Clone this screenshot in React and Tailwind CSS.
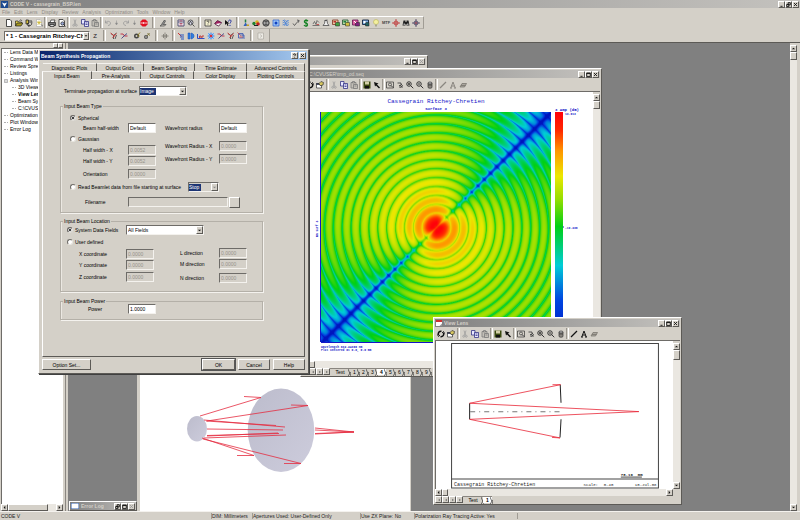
import React, { useLayoutEffect, useRef } from "react";

const FACE = "bg-[#d4d0c8]";
const RAISED = "border border-t-white border-l-white border-r-[#5c5a56] border-b-[#5c5a56]";
const SUNKEN = "border border-t-[#6e6c68] border-l-[#6e6c68] border-r-[#f4f2ee] border-b-[#f4f2ee]";

/* ---------- icons, drawn on a 16 unit grid ---------- */
const page = "M3 1h7l3 3v11H3z";
const ICONS = {
  new: <path d={page} fill="#fff" stroke="#222" strokeWidth="1.6" />,
  open: (
    <g stroke="#222" strokeWidth="1.4">
      <path d="M1 14V4h5l1 2h6v3" fill="#e8d44a" />
      <path d="M1 14l3-6h12l-4 6z" fill="#a89a20" />
      <path d="M9 3c2-2 4-1 5 1" fill="none" />
    </g>
  ),
  save2: (
    <g stroke="#222" strokeWidth="1.6">
      <path d="M2 2h5v8H2z" fill="#d8c040" />
      <path d="M6 14c6 1 9-4 7-11M5 8l1 6 4-2M10 2v6" fill="none" />
    </g>
  ),
  spark: (
    <g>
      <path d={page} fill="#fff" stroke="#999" />
      <path d="M8 3v9M4 7h9M5 4l6 7M11 4l-6 7" stroke="#c8b020" strokeWidth="1.2" />
      <path d="M12 12h3v3" stroke="#555" fill="none" />
    </g>
  ),
  print: (
    <g stroke="#222" strokeWidth="1.4">
      <path d="M4 7l2-5h8l-2 5" fill="#fff" />
      <path d="M1 7h14v6H1z" fill="#777" />
      <path d="M4 11h8v4H4z" fill="#ddd" />
    </g>
  ),
  preview: (
    <g stroke="#222" strokeWidth="1.5">
      <path d="M2 1h8l3 3v11H2z" fill="#fff" />
      <circle cx="9" cy="9" r="3.2" fill="#9ad" />
      <path d="M11 11l4 4" />
    </g>
  ),
  cut: (
    <g stroke="#999" strokeWidth="1.5" fill="none">
      <path d="M6 1l3 9M10 1L7 10" />
      <circle cx="5.5" cy="12.5" r="2" />
      <circle cx="10.5" cy="12.5" r="2" />
    </g>
  ),
  copy: (
    <g stroke="#2a2a80" strokeWidth="1.5" fill="#e8e8ff">
      <path d="M1 1h7v9H1z" />
      <path d="M7 5h8v10H7zM9 8h4M9 11h4" />
    </g>
  ),
  paste: (
    <g stroke="#777" strokeWidth="1.5" fill="#c4c0b8">
      <path d="M2 3h10v11H2z" />
      <path d="M5 1h4v3H5zM7 7h8v8H7zM9 10h4" />
    </g>
  ),
  undo: <path d="M3 3v5h5M3 8c3-5 9-4 10 0 0 3-2 5-5 5" fill="none" stroke="#999" strokeWidth="1.6" />,
  redo: <path d="M13 3v5H8M13 8C10 3 4 4 3 8c0 3 2 5 5 5" fill="none" stroke="#999" strokeWidth="1.6" />,
  drop: <path d="M7 3v7M5 8h4l-2 4z" fill="#888" stroke="#888" />,
  stop: (
    <g>
      <path d="M5 1h6l4 4v6l-4 4H5l-4-4V5z" fill="#e01020" />
      <path d="M3 8h10" stroke="#fff" strokeWidth="3" strokeDasharray="2 1" />
    </g>
  ),
  pen: (
    <g stroke="#444" strokeWidth="1.4" fill="#c8c4bc">
      <path d="M2 14h9l3-3H6z" />
      <path d="M5 11l6-9 2 2-4 7" fill="#999" />
    </g>
  ),
  sheet: (
    <g stroke="#343460" strokeWidth="1.6" fill="#fff">
      <path d="M2 2h12v12H2zM2 6h12" />
      <path d="M5 9h6M5 12h6M5 4h6" stroke="#a03050" />
    </g>
  ),
  find: (
    <g stroke="#333" strokeWidth="1.6" fill="#dde">
      <circle cx="7" cy="7" r="5" />
      <path d="M7 4l-3 6M7 4l3 6M11 11l4 4" />
    </g>
  ),
  book: (
    <g stroke="#333" strokeWidth="1.5">
      <path d="M2 2h12v12H2z" fill="#f4f0d0" />
      <path d="M6 6c0-3 4-3 4 0 0 1-2 2-2 3M8 11v1" fill="none" />
    </g>
  ),
  bookred: (
    <g stroke="#401030" strokeWidth="1.3">
      <path d="M1 9l6-6 8 4-6 7z" fill="#a02060" />
      <path d="M2 10l7 4 6-6" fill="#fff" />
    </g>
  ),
  whats: (
    <g>
      <path d="M2 2v10l3-3 2 5 2-1-2-4h4z" fill="#111" />
      <path d="M9 5c0-4 6-4 5 0 0 2-2 2-2 4M12 12v2" stroke="#2030a0" strokeWidth="2" fill="none" />
    </g>
  ),
  bulb: (
    <g>
      <path d="M7 1v6" stroke="#208040" strokeWidth="3" />
      <path d="M3 14l4-7 5 7z" fill="#3060c0" />
      <path d="M9 11h5v3H9z" fill="#c8a020" />
    </g>
  ),
  balls: (
    <g>
      <circle cx="4" cy="9" r="3.4" fill="#208030" />
      <circle cx="10" cy="6" r="3.6" fill="#d8b020" />
      <circle cx="12" cy="10" r="3.6" fill="#c02020" />
      <path d="M4 13h8" stroke="#222" strokeWidth="2" />
    </g>
  ),
  wheel: (
    <g stroke="#222" strokeWidth="1.8" fill="#ddd">
      <circle cx="8" cy="8" r="6.3" />
      <path d="M2 8h12M4 5h8M4 11h8M8 2v12" strokeWidth="1.2" />
    </g>
  ),
  spot: (
    <g>
      <path d="M2 2h12v12H2z" fill="#9cc4f4" stroke="#2860d0" strokeWidth="1.4" />
      <circle cx="8" cy="8" r="3" fill="#1040c0" />
    </g>
  ),
  waves: (
    <path d="M1 4l4-2 4 3 5-2M1 8l4-2 4 3 5-2M1 12l4-2 4 3 5-2M3 2l8 12M11 2L4 14" stroke="#3878d8" strokeWidth="1.3" fill="none" />
  ),
  tool: (
    <g stroke="#555" strokeWidth="1.8" fill="none">
      <path d="M2 9l3 4 4-5 5-5" />
      <path d="M10 2l4 1-1 4" />
    </g>
  ),
  dollar: (
    <g stroke="#108020" strokeWidth="2.6" fill="none">
      <path d="M12 4C8 1 4 3 5 6s7 2 6 6c-1 3-5 3-7 0" />
      <path d="M8 1v14" strokeWidth="1.6" />
    </g>
  ),
  chart: (
    <g stroke="#555" strokeWidth="1.5" fill="none">
      <path d="M1 13h14M2 10l3-5 3 6 2-8 4 4" />
      <path d="M9 11h5" stroke="#c03030" />
    </g>
  ),
  bell: (
    <g stroke="#444" strokeWidth="1.5" fill="#eee">
      <path d="M2 13h12l-3-4-1-6H6L5 9z" />
      <path d="M5 3l6-1" />
    </g>
  ),
  mapA: (
    <g>
      <path d="M1 2h11v9H1z" fill="#e8c8a0" stroke="#803020" strokeWidth="1.6" />
      <path d="M7 7h8v7H7z" fill="#40a040" stroke="#222" />
      <path d="M3 4h5v3H3z" fill="#c03030" />
    </g>
  ),
  mapB: (
    <g>
      <path d="M1 2h11v9H1z" fill="#b0d8a0" stroke="#205030" strokeWidth="1.6" />
      <path d="M7 7h8v7H7z" fill="#d0c040" stroke="#222" />
      <path d="M3 4h5v3H3z" fill="#208040" />
    </g>
  ),
  mapC: (
    <g>
      <path d="M1 2h11v10H1z" fill="#e060a0" stroke="#601050" strokeWidth="1.6" />
      <path d="M7 7h8v7H7z" fill="#802080" stroke="#222" />
      <path d="M4 4l4 4" stroke="#fff" strokeWidth="2" />
    </g>
  ),
  mapD: (
    <g>
      <path d="M1 2h12v9H1z" fill="#80b0e0" stroke="#102040" strokeWidth="1.8" />
      <path d="M7 7h7v7H7z" fill="#206060" stroke="#222" />
      <path d="M3 4h4v4H3z" fill="#fff" />
    </g>
  ),
  lamp: (
    <g>
      <circle cx="8" cy="6" r="5" fill="#f4f0a0" stroke="#b0a840" />
      <path d="M6 11h4v4H6z" fill="#a8a890" />
    </g>
  ),
  target: (
    <g stroke="#c04040" strokeWidth="1.8" fill="none">
      <circle cx="8" cy="8" r="4" />
      <path d="M8 0v16M0 8h16" />
    </g>
  ),
  targetB: (
    <g stroke="#504868" strokeWidth="1.8" fill="none">
      <circle cx="8" cy="8" r="4" />
      <path d="M8 0v16M0 8h16" />
      <circle cx="8" cy="8" r="1.5" fill="#c03040" stroke="none" />
    </g>
  ),
  bino: (
    <g fill="#222">
      <path d="M3 3h4v3h2V3h4l2 10H9v-3H7v3H1z" />
      <path d="M3 9h3v3H3zM10 9h3v3h-3z" fill="#aaa" />
    </g>
  ),
  redray: (
    <g strokeWidth="1.7" fill="none">
      <path d="M2 3l5 4 6-5M7 7v7M13 6l-3 8" stroke="#444" />
      <path d="M1 2l8 6M5 12l8-9" stroke="#d03030" />
    </g>
  ),
  gear: (
    <g>
      <circle cx="7" cy="8" r="5" fill="#444" />
      <circle cx="7" cy="8" r="2" fill="#d4d0c8" />
      <path d="M9 7l5-6M10 9l3-1" stroke="#908020" strokeWidth="2" />
    </g>
  ),
  gearB: (
    <g>
      <circle cx="6" cy="10" r="4" fill="#555" />
      <circle cx="6" cy="10" r="1.6" fill="#d4d0c8" />
      <path d="M8 8l5-6M9 3l5 4" stroke="#807840" strokeWidth="2" />
    </g>
  ),
  cross: <path d="M8 1v14M1 8h14M5 4v8M11 4v8" stroke="#77736c" strokeWidth="1.5" />,
  bars: (
    <g strokeWidth="2">
      <path d="M2 2l7 7" stroke="#d03030" />
      <path d="M6 6h8M6 10h8M8 14h6" stroke="#2858c0" />
    </g>
  ),
  blueD: (
    <g fill="#3080e0" stroke="#1848b0">
      <path d="M2 2h4v12H2zM8 2c8 1 8 11 0 12z" />
    </g>
  ),
  err: (
    <g strokeWidth="1.8" fill="none">
      <path d="M1 4v9h14" stroke="#2040c0" />
      <path d="M5 12V8h3v4M10 12V8h4" stroke="#c03030" />
    </g>
  ),
  star: (
    <g>
      <path d="M2 2h12v12H2z" fill="#a8ccf4" />
      <path d="M8 1v14M1 8h14M3 3l10 10M13 3L3 13" stroke="#2878e0" strokeWidth="1.6" />
      <circle cx="8" cy="8" r="2.6" fill="#e03030" />
    </g>
  ),
  ray2: (
    <g strokeWidth="1.8" fill="none">
      <path d="M1 4h5l3 4h6" stroke="#c02840" />
      <path d="M3 13l5-5 6-5" stroke="#404080" />
    </g>
  ),
  boxes: (
    <g strokeWidth="1.5" fill="none">
      <path d="M3 3h9v9H3zM6 6h8v8" stroke="#3050b0" />
      <path d="M1 1l6 6M5 10h6" stroke="#d03030" />
    </g>
  ),
  ghost: (
    <g stroke="#9a968e" fill="#eceae4">
      <path d="M2 2h11v12H2z" />
      <path d="M6 5l4 3-4 3" fill="none" />
    </g>
  ),
  recycle: (
    <g stroke="#111" strokeWidth="3" fill="none">
      <path d="M9 2.5C4 2 1.5 6 3 10M7 13.5c5 .5 7.5-3.5 6-8" />
      <path d="M1 9l2 4 3-3M15 7l-2-4-3 3" strokeWidth="1.8" />
    </g>
  ),
  props: (
    <g stroke="#333" strokeWidth="1.4">
      <path d="M1 5h10v9H1z" fill="#fff" />
      <path d="M1 5h10v2H1z" fill="#2030a0" />
      <path d="M8 9l-2-4 4-4 5 2-1 5-4 1z" fill="#d8c860" />
    </g>
  ),
  disk: (
    <g>
      <path d="M1 1h14v14H1z" fill="#3a4a10" />
      <path d="M4 1h8v6H4z" fill="#d4d0a8" />
      <path d="M4 10h8v5H4z" fill="#111" />
    </g>
  ),
  arrow: <path d="M2 2l2 9 2-2 6 6 2-2-6-6 3-2z" fill="#111" />,
  zoomfit: (
    <g stroke="#333" strokeWidth="1.4" fill="none">
      <path d="M1 2h14v12H1z" />
      <circle cx="8" cy="7" r="3" />
      <path d="M10 9l4 4" strokeWidth="2" />
    </g>
  ),
  pan: (
    <g stroke="#333" strokeWidth="1.6" fill="none">
      <path d="M3 4h7v5H6M6 12h8" />
      <path d="M10 6l3 3-4 4" />
    </g>
  ),
  zoomin: (
    <g stroke="#222" strokeWidth="1.8" fill="none">
      <circle cx="6" cy="6" r="4.5" />
      <path d="M4 6h4M6 4v4M9.5 9.5l5 5" />
    </g>
  ),
  zoomout: (
    <g stroke="#222" strokeWidth="1.8" fill="none">
      <circle cx="6" cy="6" r="4.5" />
      <path d="M4 6h4M9.5 9.5l5 5" />
    </g>
  ),
  can: (
    <g stroke="#333" strokeWidth="1.4" fill="#8a8680">
      <path d="M4 4h8v9c-2 2-6 2-8 0z" />
      <ellipse cx="8" cy="4" rx="4" ry="2" fill="#ccc" />
      <path d="M4 8h8" />
    </g>
  ),
  line: <path d="M2 14L14 2" stroke="currentColor" strokeWidth="2.4" />,
  letter: <path d="M2 14h4M10 14h4M3.5 14L8 2l4.5 12M5 10h6" stroke="currentColor" strokeWidth="2" fill="none" />,
  erase: <path d="M2 12l4-7h9l-4 7zM4 9h9" fill="#aaa69e" stroke="#77736c" strokeWidth="1.5" />,
};

const Icon = ({ name }) => (
  <svg viewBox="0 0 16 16" className="h-2 w-2 shrink-0" aria-hidden="true">
    {ICONS[name]}
  </svg>
);

const Tool = ({ name, className = "w-[10px] text-[#222]" }) => (
  <button type="button" aria-label={name} className={`flex h-[10px] shrink-0 items-center justify-center ${className}`}>
    <Icon name={name} />
  </button>
);

const Sep = ({ className = "w-[3px]" }) => (
  <div className={`flex h-[11px] shrink-0 justify-center gap-px ${className}`}>
    <div className="w-px bg-[#9a968e]" />
    <div className="w-px bg-white" />
  </div>
);

const Tools = ({ names }) => names.map((n) => <Tool key={n} name={n} />);

/* ---------- window parts ---------- */
const GLYPHS = {
  min: "M2 6h3",
  max: "M1 1.5h5v5h-5zM1 2h5",
  restore: "M3 1h3v3H3zM1 3.5h3v3H1z",
  close: "M1.5 1.5l4 4M5.5 1.5l-4 4",
  help: "M2 2.5C2 .8 5 .8 5 2.5 5 3.5 3.5 3.5 3.5 4.5M3.5 6v.6",
};

const Caption = ({ kind, dim }) => (
  <button type="button" aria-label={kind} className={`${FACE} ${RAISED} flex h-[7px] w-[7px] items-center justify-center`}>
    <svg viewBox="0 0 7 7" className="h-[5px] w-[5px]">
      <path d={GLYPHS[kind]} fill="none" stroke={dim ? "#999" : "#111"} strokeWidth="1.3" />
    </svg>
  </button>
);

const Captions = ({ kinds, dimClose }) => (
  <div className="ml-auto flex items-center">
    {kinds.map((k) => (
      <Caption key={k} kind={k} dim={dimClose && k === "close"} />
    ))}
  </div>
);

const ARROWS = { up: "M1 4l2-2 2 2z", down: "M1 2l2 2 2-2z", left: "M4 1L2 3l2 2z", right: "M2 1l2 2-2 2z" };
const ScrollButton = ({ dir }) => (
  <button type="button" aria-label={`Scroll ${dir}`} className={`${FACE} ${RAISED} flex h-[7px] w-[7px] shrink-0 items-center justify-center`}>
    <svg viewBox="0 0 6 6" className="h-[5px] w-[5px]">
      <path d={ARROWS[dir]} fill="#111" />
    </svg>
  </button>
);

const VScroll = ({ thumb = "h-[8px]" }) => (
  <div className="flex w-[7px] shrink-0 flex-col bg-[#eae7e1]">
    <div className={`${FACE} h-[2px]`} />
    <ScrollButton dir="up" />
    <div className={`${FACE} ${RAISED} ${thumb}`} />
    <div className="flex-1" />
    <ScrollButton dir="down" />
  </div>
);

const HScroll = ({ thumb = "w-[6px]" }) => (
  <div className="flex h-[7px] shrink-0 bg-[#eae7e1]">
    <ScrollButton dir="left" />
    <div className={`${FACE} ${RAISED} ${thumb}`} />
    <div className="flex-1" />
    <ScrollButton dir="right" />
  </div>
);

const SheetTabs = ({ tabs, active }) => (
  <div className="flex h-[7px] shrink-0 items-center text-[5px] leading-[6px]">
    {["First", "Previous", "Next", "Last"].map((n, i) => (
      <button key={n} type="button" aria-label={n} className={`${FACE} ${RAISED} flex h-[7px] w-[7px] shrink-0 items-center justify-center`}>
        <svg viewBox="0 0 6 6" className="h-1 w-1">
          <path d={i < 2 ? ARROWS.left : ARROWS.right} fill="#555" />
        </svg>
      </button>
    ))}
    {tabs.map((t) => (
      <button
        key={t}
        type="button"
        className={`relative flex h-[7px] shrink-0 items-center justify-center border-t border-[#8a8680] ${t === "Text" ? "w-[20px]" : "w-[9px]"} ${t === active ? "bg-white font-bold" : ""}`}
      >
        {t}
        <svg viewBox="0 0 3 7" className="absolute top-0 -right-px h-[7px] w-[3px]">
          <path d="M0 0l3 7M3 3L0 7" stroke="#333" strokeWidth="0.7" />
        </svg>
      </button>
    ))}
  </div>
);

const ChildTitle = ({ children, kinds = ["min", "max", "close"], dimClose }) => (
  <div className="flex h-[8px] shrink-0 items-center gap-[2px] bg-linear-to-r from-[#808080] to-[#c4c2be] px-px text-[5px] leading-[6px] font-bold text-[#d4d0c8]">
    {children}
    <Captions kinds={kinds} dimClose={dimClose} />
  </div>
);

const DocIcon = () => (
  <svg viewBox="0 0 12 12" className="h-[6px] w-[6px]">
    <path d="M0 0h12v12H0z" fill="#fff" />
    <path d="M0 0h12v4H0z" fill="#d03030" />
    <path d="M7 12h5V7" fill="#999" />
  </svg>
);

const ChildToolbar = ({ dimTools }) => (
  <div className="flex h-[13px] shrink-0 items-center pl-px">
    <Tools names={["recycle", "props"]} />
    <Sep className="w-[4px]" />
    <Tools names={["cut", "copy", "paste"]} />
    <Sep />
    <Tools names={["disk", "arrow"]} />
    <Sep />
    <Tools names={["zoomfit", "pan", "zoomin", "zoomout", "can"]} />
    <Sep />
    <Tool name="line" className={dimTools ? "w-[10px] text-[#8a8680]" : "w-[10px] text-[#111]"} />
    <Tool name="letter" className={dimTools ? "w-[10px] text-[#8a8680]" : "w-[10px] text-[#111]"} />
    <Tool name="erase" />
  </div>
);

/* ---------- amplitude map ---------- */
const STOPS = [
  [0, 0, 20, 190],
  [0.18, 0, 70, 225],
  [0.33, 0, 205, 215],
  [0.5, 0, 208, 20],
  [0.62, 150, 222, 0],
  [0.72, 236, 232, 0],
  [0.84, 255, 150, 0],
  [0.93, 255, 50, 0],
  [1, 255, 0, 10],
];

function colorAt(v) {
  const t = Math.min(1, Math.max(0, v));
  let i = 1;
  while (i < STOPS.length - 1 && t > STOPS[i][0]) i++;
  const a = STOPS[i - 1];
  const b = STOPS[i];
  const f = (t - a[0]) / (b[0] - a[0]);
  return [1, 2, 3].map((k) => a[k] + (b[k] - a[k]) * f);
}

/* Level in 0..1 at an offset from the centre: rings, cut by a dark diagonal. */
function amplitude(dx, dy) {
  const r = Math.hypot(dx, dy);
  const dist = Math.abs(dx + dy) / Math.SQRT2;
  const across = dist / (r + 0.01);
  const pitch = 8.9;
  const first = 14.2;
  const wave = r < first ? Math.sin((Math.PI * r) / first) : Math.sin((Math.PI * (r - first)) / pitch);
  const ringEps = 0.08 + 2 / (r + 8);
  const ring = r < first ? 0.08 * Math.log(Math.abs(wave) + 0.3) : 0.095 * Math.log(Math.abs(wave) + ringEps);
  const base = 0.59 + 0.32 * Math.exp(-r / 48) + 0.12 * Math.exp(-((r / 13) ** 2));
  const lineEps = 0.03 + 1.4 / (r + 6);
  const line = (0.06 + 0.0003 * r) * Math.log(Math.min(1, across * 1.3 + lineEps));
  const trough = 0.0006 * r * Math.exp(-((across / 0.2) ** 2));
  const core = 0.2 * Math.min(1, r / 45) * Math.exp(-((dist / 1.8) ** 2));
  return base + ring + line - trough - core;
}

function AmplitudeMap() {
  const ref = useRef(null);
  useLayoutEffect(() => {
    const { width, height } = ref.current;
    const ctx = ref.current.getContext("2d");
    const img = ctx.createImageData(width, height);
    for (let y = 0; y < height; y++) {
      for (let x = 0; x < width; x++) {
        let c = [0, 0, 0];
        for (const [ox, oy] of [[-0.25, -0.25], [0.25, -0.25], [-0.25, 0.25], [0.25, 0.25]]) {
          const s = colorAt(amplitude(x + ox - width / 2, y + oy - height / 2));
          c = c.map((v, k) => v + s[k] / 4);
        }
        img.data.set([c[0], c[1], c[2], 255], (y * width + x) * 4);
      }
    }
    ctx.putImageData(img, 0, 0);
  }, []);
  return <canvas ref={ref} width="230" height="229" className="shrink-0" />;
}

const MONO = "font-['Liberation_Mono',monospace]";

const PlotWindow = () => (
  <section className={`${FACE} ${RAISED} absolute top-[25px] left-[232px] flex h-[309px] w-[302px] flex-col p-px`}>
    <ChildTitle>
      <span className="pl-[6px] font-normal">C:\CVUSER\tmp_od.seq</span>
    </ChildTitle>
    <div className="pl-[2px]">
      <ChildToolbar dimTools />
    </div>
    <div className="flex min-h-0 flex-1 border-t border-[#6e6c68] pl-[6px]">
      <div className={`${MONO} flex flex-1 flex-col overflow-hidden bg-white pl-[6px] text-[#1414c8]`}>
        <div className="ml-[7px] w-[230px] pt-[6px] text-center">
          <h2 className="text-[6px] leading-[8px]">Cassegrain Ritchey-Chretien</h2>
          <p className="text-[4px] leading-[6px] font-bold">Surface 3</p>
        </div>
        <div className="flex">
          <svg viewBox="0 0 7 230" className="h-[230px] w-[7px] shrink-0">
            <text transform="translate(4 125) rotate(-90)" fontSize="3" fontWeight="bold" fill="#1414c8">mm surf 3</text>
            <path d="M6.5 0v230" stroke="#1414c8" />
          </svg>
          <AmplitudeMap />
          <svg viewBox="0 0 40 230" className="h-[230px] w-[40px] shrink-0 overflow-visible">
            <defs>
              <linearGradient id="scale" x1="0" y1="0" x2="0" y2="1">
                <stop offset="0" stopColor="#ff000a" />
                <stop offset="0.08" stopColor="#ff2800" />
                <stop offset="0.17" stopColor="#ff9600" />
                <stop offset="0.28" stopColor="#ece800" />
                <stop offset="0.38" stopColor="#96de00" />
                <stop offset="0.5" stopColor="#00d014" />
                <stop offset="0.67" stopColor="#00cdd7" />
                <stop offset="0.82" stopColor="#0046e1" />
                <stop offset="1" stopColor="#0014be" />
              </linearGradient>
            </defs>
            <rect x="4" width="8" height="229" fill="url(#scale)" />
            <g fontSize="4" fontWeight="bold" fill="#1414c8">
              <text x="4" y="-1">3 Amp (dB)</text>
              <text x="14" y="3" fontSize="3">13.613</text>
              <text x="14" y="117" fontSize="3">-19.236</text>
            </g>
            <path d="M12 115h1" stroke="#1414c8" />
          </svg>
        </div>
        <div className="w-[240px] pl-[7px] text-[3px] leading-[3px] font-bold">
          <div className="mb-[3px] h-px bg-[#1414c8]" />
          <p>Wavelength 632.24300 nm</p>
          <p>Plot centered at 0.0, 0.0 mm</p>
        </div>
      </div>
      <VScroll />
    </div>
    <div className="pr-[7px]">
      <HScroll />
    </div>
    <SheetTabs tabs={["Text", "1", "2", "3", "4", "5", "6", "7", "8", "9"]} active="4" />
  </section>
);

const LensWindow = () => (
  <section className={`${FACE} ${RAISED} absolute top-[274px] left-[365px] flex h-[188px] w-[249px] flex-col p-px`}>
    <ChildTitle>
      <DocIcon />
      <span>View Lens</span>
    </ChildTitle>
    <ChildToolbar />
    <div className="flex min-h-0 flex-1 border-t border-l border-[#6e6c68] bg-white">
      <svg viewBox="436 341 236 147" preserveAspectRatio="xMinYMin meet" className="min-w-0 flex-1 font-['Liberation_Mono',monospace]">
        <path d="M451.5 343.5h206v144h-206zM451.5 478.5h206" fill="none" stroke="#444" />
        <path d="M469.5 403v16M559.7 384.5l.8 18M560.5 419l-1 18" fill="none" stroke="#222" />
        <path d="M470 411.5h91" stroke="#777" strokeDasharray="5 4 1 4" />
        <path d="M552 384.5h8L469.5 403 638 411.3 469.5 419l90 18.5-8-.5" fill="none" stroke="#e82838" strokeWidth="0.8" />
        <path d="M620 476.5h21" stroke="#444" />
        <g fill="#222">
          <text x="454" y="485" fontSize="5">Cassegrain Ritchey-Chretien</text>
          <text x="583" y="485" fontSize="4">Scale:</text>
          <text x="603" y="485" fontSize="4">0.40</text>
          <text x="634" y="485" fontSize="4">10-Jul-08</text>
          <text x="620" y="475" fontSize="4" fontWeight="bold">78.16</text>
          <text x="637" y="475" fontSize="4" fontWeight="bold">mm</text>
        </g>
      </svg>
      <VScroll thumb="h-[10px]" />
    </div>
    <div className="pr-[7px]">
      <HScroll />
    </div>
    <SheetTabs tabs={["Text", "1"]} active="1" />
  </section>
);

const ViewerWindow = () => (
  <section className="absolute top-[150px] bottom-0 left-[69px] flex w-[274px] overflow-hidden border-r border-l-[3px] border-[#d4d0c8] bg-white">
    <svg viewBox="140 193 270 318" className="h-[318px] w-[270px]">
      <defs>
        <linearGradient id="glass" x1="0" y1="0" x2="1" y2="1">
          <stop offset="0" stopColor="#bcbccc" />
          <stop offset="1" stopColor="#cdccdc" />
        </linearGradient>
      </defs>
      <ellipse cx="197" cy="428.7" rx="10" ry="12.7" fill="url(#glass)" />
      <ellipse cx="281" cy="430.3" rx="33.3" ry="41.7" fill="url(#glass)" />
      <g fill="none" stroke="#e42c40" strokeWidth="0.8">
        <path d="M200 416l61-18.5-17-1" />
        <path d="M207 421l101-15.5-17-.5" />
        <path d="M204 420l81 7M206 421l70 4.5M207 429l76 1M207 435.5l72-2M204 438l82-3M207 436l71-3" />
        <path d="M202 438l52 17.5h-17M203 439l98 24.5h-17" />
        <path d="M315 428l39 4-39 1.5M315 430l39 2M315 434l39-2" />
      </g>
    </svg>
  </section>
);

/* ---------- dialog parts ---------- */
const Field = ({ id, value, disabled, className = "w-[28px]" }) => (
  <input
    id={id}
    defaultValue={value}
    disabled={disabled}
    className={`${SUNKEN} h-[10px] min-w-0 shrink-0 rounded-none px-px text-[5px] leading-[6px] ${disabled ? "bg-[#d4d0c8] text-[#96928a]" : "bg-white text-black"} ${className}`}
  />
);

const Combo = ({ id, value, selected, disabled, label, className }) => (
  <div className={`${SUNKEN} flex h-[10px] items-center ${disabled ? FACE : "bg-white"} ${className}`}>
    <select
      id={id}
      aria-label={label}
      disabled={disabled}
      className={`h-[7px] appearance-none text-[5px] leading-[6px] opacity-100 ${selected ? "bg-[#1c3474] text-white" : "flex-1 px-px"} ${value === "Image" ? "w-[16px]" : ""} ${value === "Stop" ? "w-[12px]" : ""}`}
    >
      <option>{value}</option>
    </select>
    <div className={`${FACE} ${RAISED} ml-auto flex h-[8px] w-[7px] items-center justify-center`}>
      <svg viewBox="0 0 6 6" className="h-[5px] w-[5px]">
        <path d={ARROWS.down} fill={disabled ? "#888" : "#111"} />
      </svg>
    </div>
  </div>
);

const Radio = ({ name, children, checked }) => (
  <label className="flex items-center gap-[2px]">
    <input
      type="radio"
      name={name}
      defaultChecked={checked}
      className="h-[6px] w-[6px] appearance-none rounded-full border border-t-[#6e6c68] border-l-[#6e6c68] border-r-[#e8e6e0] border-b-[#e8e6e0] bg-white checked:bg-black checked:shadow-[inset_0_0_0_1px_white]"
    />
    {children}
  </label>
);

const GROUP = "w-[203px] border border-[#b4b0a8] shadow-[inset_1px_0_0_#ebe8e2,1px_1px_0_#f4f2ee]";
const Legend = ({ children }) => <legend className="ml-[2px] px-px leading-[6px]">{children}</legend>;

const PushButton = ({ children, className }) => (
  <button type="button" className={`${FACE} ${RAISED} flex h-[11px] items-center justify-center ${className}`}>
    {children}
  </button>
);

const TABS_BACK = [
  ["Diagnostic Plots", "w-[54px]"],
  ["Output Grids", "w-[47px]"],
  ["Beam Sampling", "w-[52px]"],
  ["Time Estimate", "w-[52px]"],
  ["Advanced Controls", "w-[58px]"],
];
const TABS_FRONT = [
  ["Input Beam", "w-[50px]"],
  ["Pre-Analysis", "w-[49px]"],
  ["Output Controls", "w-[54px]"],
  ["Color Display", "w-[53px]"],
  ["Plotting Controls", "w-[58px]"],
];

const TabRow = ({ tabs }) => (
  <div className="flex h-[8px]">
    {tabs.map(([t, w]) => (
      <button
        key={t}
        type="button"
        role="tab"
        aria-selected={t === "Input Beam"}
        className={`flex items-center justify-center border-t border-r border-t-[#f4f2ee] border-r-[#5c5a56] ${w} ${t === "Input Beam" ? "border-l border-l-white" : ""}`}
      >
        {t}
      </button>
    ))}
  </div>
);

const LabeledLeft = ({ id, label, value, disabled, pad = "pl-[22px]" }) => (
  <div className="flex items-center">
    <label htmlFor={id} className={`w-[67px] shrink-0 ${pad}`}>{label}</label>
    <Field id={id} value={value} disabled={disabled} />
  </div>
);

const LabeledRight = ({ id, label, value, disabled, className = "" }) => (
  <div className={`flex h-[10px] items-center ${className}`}>
    <label htmlFor={id} className="w-[54px] shrink-0">{label}</label>
    <Field id={id} value={value} disabled={disabled} />
  </div>
);

const Dialog = () => (
  <section
    role="dialog"
    aria-label="Beam Synthesis Propagation"
    className={`${FACE} ${RAISED} absolute top-[49px] left-[38px] flex h-[325px] w-[271px] flex-col p-px text-[5px] leading-[6px] whitespace-nowrap text-black shadow-[1px_1px_0_#404040]`}
  >
    <div className="flex h-[9px] shrink-0 items-center bg-linear-to-r from-[#0a246a] to-[#a6caf0] px-px font-bold text-white">
      Beam Synthesis Propagation
      <div className="ml-auto flex gap-px">
        <Caption kind="help" />
        <Caption kind="close" />
      </div>
    </div>
    <div className="px-[2px] pt-[3px]">
      <div className="pl-px">
        <TabRow tabs={TABS_BACK} />
      </div>
      <TabRow tabs={TABS_FRONT} />
    </div>
    <div className="mx-[2px] flex-1 border border-t-0 border-l-white border-r-[#5c5a56] border-b-[#5c5a56]">
      <div className="ml-[48px] border-t border-white" />
      <div className="flex items-center pt-[6px] pl-[21px]">
        <label htmlFor="surface" className="w-[75px]">Terminate propagation at surface</label>
        <Combo id="surface" value="Image" selected className="w-[48px]" />
      </div>
      <div className="flex flex-col gap-[8px] pt-[7px] pl-[17px]">
        <fieldset className={GROUP}>
          <Legend>Input Beam Type</Legend>
          <div className="pt-[4px] pb-[2px]">
            <div className="flex h-[10px] items-center pl-[9px]">
              <Radio name="beam" checked>Spherical</Radio>
            </div>
            <div className="flex">
              <div className="grid w-[104px] grid-rows-[10px_12px_10px_12px_13px]">
                <LabeledLeft id="bhw" label="Beam half-width" value="Default" />
                <div className="flex items-center pl-[9px]">
                  <Radio name="beam">Gaussian</Radio>
                </div>
                <LabeledLeft id="hwx" label="Half width - X" value="0.0052" disabled />
                <LabeledLeft id="hwy" label="Half width - Y" value="0.0052" disabled />
                <LabeledLeft id="ori" label="Orientation" value="0.0000" disabled />
              </div>
              <div className="flex flex-col">
                <LabeledRight id="wfr" label="Wavefront radius" value="Default" />
                <LabeledRight id="wrx" label="Wavefront Radius - X" value="0.0000" disabled className="mt-2" />
                <LabeledRight id="wry" label="Wavefront Radius - Y" value="0.0000" disabled className="mt-[3px]" />
              </div>
            </div>
            <div className="flex h-[14px] items-center pl-[9px]">
              <div className="w-[118px]">
                <Radio name="beam">Read Beamlet data from file starting at surface</Radio>
              </div>
              <Combo label="Starting surface" value="Stop" selected disabled className="w-[31px]" />
            </div>
            <div className="flex h-[16px] items-center">
              <label htmlFor="file" className="w-[67px] pl-[24px]">Filename</label>
              <Field id="file" value="" disabled className="w-[100px]" />
              <PushButton className="ml-px w-[11px]" />
            </div>
          </div>
        </fieldset>

        <fieldset className={`${GROUP} -mt-[3px]`}>
          <Legend>Input Beam Location</Legend>
          <div className="pb-[7px]">
            <div className="flex h-[12px] items-center pl-[6px]">
              <div className="w-[59px]">
                <Radio name="location" checked>System Data Fields</Radio>
              </div>
              <Combo label="Field" value="All Fields" className="w-[78px]" />
            </div>
            <div className="flex h-[12px] items-center pl-[6px]">
              <Radio name="location">User defined</Radio>
            </div>
            <div className="flex gap-[26px]">
              <div className="grid grid-rows-[11px_11px_14px]">
                {["X", "Y", "Z"].map((a) => (
                  <div key={a} className="flex items-center">
                    <label htmlFor={`c${a}`} className="w-[65px] pl-[18px]">{a} coordinate</label>
                    <Field id={`c${a}`} value="0.0000" disabled />
                  </div>
                ))}
              </div>
              <div className="grid grid-rows-[9px_14px_13px]">
                {["L", "M", "N"].map((a) => (
                  <div key={a} className="flex items-center">
                    <label htmlFor={`d${a}`} className="w-[39px]">{a} direction</label>
                    <Field id={`d${a}`} value="0.0000" disabled />
                  </div>
                ))}
              </div>
            </div>
          </div>
        </fieldset>

        <fieldset className={`${GROUP} -mt-[2px]`}>
          <Legend>Input Beam Power</Legend>
          <div className="pb-[5px]">
            <LabeledLeft id="pow" label="Power" value="1.0000" pad="pl-[27px]" />
          </div>
        </fieldset>
      </div>
    </div>
    <div className="flex shrink-0 gap-[3px] px-[2px] pt-[2px] pb-[2px]">
      <PushButton className="mr-auto w-[49px]">Option Set...</PushButton>
      <PushButton className="w-[33px] outline outline-[#555]">OK</PushButton>
      <PushButton className="w-[32px]">Cancel</PushButton>
      <PushButton className="w-[32px]">Help</PushButton>
    </div>
  </section>
);

/* ---------- main frame ---------- */
const MENU = ["File", "Edit", "Lens", "Display", "Review", "Analysis", "Optimization", "Tools", "Window", "Help"];
const TREE = [
  ["Lens Data Manager", 0],
  ["Command Window", 0],
  ["Review Spreadsheets", 0],
  ["Listings", 0],
  ["Analysis Windows", 0],
  ["3D Viewer", 1],
  ["View Lens", 1],
  ["Beam Synthesis", 1],
  ["C:\\CVUSER", 1],
  ["Optimization", 0],
  ["Plot Windows", 0],
  ["Error Log", 0],
];

const Sidebar = () => (
  <aside className="flex w-[66px] shrink-0 flex-col border-r border-[#8a8680] pr-[2px] pl-px">
    <div className="flex h-[5px] shrink-0 justify-end">
      <button type="button" aria-label="Dock" className={`${FACE} ${RAISED} h-[5px] w-[5px]`} />
      <button type="button" aria-label="Close pane" className={`${FACE} ${RAISED} h-[5px] w-[5px]`} />
    </div>
    <ul className="flex-1 overflow-hidden border-t border-l border-[#6e6c68] bg-white text-[5px] leading-[7px] whitespace-nowrap text-black">
      {TREE.map(([t, depth]) => (
        <li key={t} className={`flex items-center gap-[2px] ${depth ? "pl-[10px]" : "pl-[2px]"} ${t === "View Lens" ? "font-bold" : ""}`}>
          {t === "Analysis Windows" ? (
            <svg viewBox="0 0 4 4" className="h-1 w-1 shrink-0">
              <path d="M.5.5h3v3h-3zM1 2h2" fill="none" stroke="#888" strokeWidth="0.6" />
            </svg>
          ) : (
            <span className="w-1 shrink-0 border-t border-dotted border-[#b0b0b0]" />
          )}
          {t}
        </li>
      ))}
    </ul>
    <HScroll thumb="w-[40px]" />
  </aside>
);

export default function App() {
  return (
    <div className={`${FACE} relative flex h-screen flex-col overflow-hidden font-['Liberation_Sans',Arial,sans-serif] text-[5px] leading-[6px]`}>
      <header className="flex h-[8px] shrink-0 items-center gap-[2px] bg-linear-to-r from-[#808080] to-[#c4c2be] px-px font-bold text-[#d4d0c8]">
        <svg viewBox="0 0 14 14" className="h-[7px] w-[7px]">
          <path d="M0 0h14v14H0z" fill="#1c4a90" />
          <path d="M2 3l5 9 5-9-5 2z" fill="#fff" />
        </svg>
        CODE V - cassegrain_BSP.len
        <Captions kinds={["min", "restore", "close"]} />
      </header>
      <nav className="flex h-[8px] shrink-0 items-center gap-[4px] px-[2px] text-[#8e8a84]">
        {MENU.map((m) => (
          <button key={m} type="button">{m}</button>
        ))}
      </nav>

      <div className="flex h-[13px] w-[424px] shrink-0 items-center border-t border-r border-b border-t-white border-r-[#a09c94] border-b-[#b4b0a8] pl-[4px]">
        <Tools names={["new", "open", "save2", "spark"]} />
        <Sep />
        <Tools names={["print", "preview"]} />
        <Sep />
        <Tools names={["cut", "copy", "paste"]} />
        <Sep />
        <Tool name="undo" />
        <Tool name="drop" className="w-[8px]" />
        <Tool name="redo" />
        <Tool name="drop" className="w-[8px]" />
        <Tool name="stop" />
        <Sep className="w-[9px]" />
        <Tool name="pen" />
        <Sep className="w-[8px]" />
        <Tools names={["sheet", "find"]} />
        <Sep className="w-[7px]" />
        <Tools names={["book", "bookred", "whats"]} />
        <Sep className="w-[8px]" />
        <Tools names={["bulb", "balls", "wheel", "spot", "waves", "tool", "dollar", "chart", "bell", "mapA", "mapB", "mapC", "mapD", "lamp"]} />
        <button type="button" className="w-[10px] shrink-0 text-[4px] font-bold text-[#444]">MTF</button>
        <Tools names={["target", "bino", "targetB"]} />
      </div>

      <div className="flex h-[13px] w-[270px] shrink-0 items-center border-r border-[#a09c94] pl-[4px]">
        <div className={`${SUNKEN} flex h-[10px] w-[86px] shrink-0 items-center bg-white`}>
          <select aria-label="Lens" className="min-w-0 flex-1 appearance-none overflow-hidden pl-px text-[6px] leading-[8px] font-bold text-black">
            <option>* 1 - Cassegrain Ritchey-Chretien</option>
          </select>
          <div className={`${FACE} ${RAISED} flex h-[8px] w-[6px] items-center justify-center`}>
            <svg viewBox="0 0 6 6" className="h-1 w-1">
              <path d={ARROWS.down} fill="#111" />
            </svg>
          </div>
        </div>
        <button type="button" className="w-[10px] text-[6px] leading-[8px] text-[#222]">Z</button>
        <Sep className="w-[9px]" />
        <Tools names={["redray", "ray2"]} />
        <div className="w-[3px]" />
        <Tools names={["gear", "gearB"]} />
        <Sep className="w-[8px]" />
        <Tool name="cross" />
        <Sep className="w-[6px]" />
        <Tools names={["bars", "blueD", "err", "star", "ray2", "redray", "boxes"]} />
        <Sep className="w-[10px]" />
        <Tool name="ghost" />
      </div>

      <div className="flex min-h-0 flex-1 border-t border-[#5c5a56]">
        <Sidebar />
        <main className="relative ml-[2px] min-w-0 flex-1 overflow-hidden bg-[#808080]">
          <section className={`${FACE} ${RAISED} absolute top-[12px] left-[112px] h-[315px] w-[248px] p-px`}>
            <ChildTitle dimClose />
          </section>
          <ViewerWindow />
          <PlotWindow />
          <LensWindow />
          <section className={`${FACE} ${RAISED} absolute bottom-0 left-px w-[68px]`}>
            <ChildTitle kinds={["restore", "max", "close"]} dimClose>
              <svg viewBox="0 0 8 6" className="h-[6px] w-[8px]">
                <path d="M0 0h8v6H0z" fill="#fff" stroke="#3060b0" />
              </svg>
              <span>Error Log</span>
            </ChildTitle>
          </section>
        </main>
        <div className="mr-[3px] flex">
          <VScroll />
        </div>
      </div>

      <footer className="flex h-[9px] shrink-0 items-center border-t border-[#f4f2ee] pl-px whitespace-nowrap text-[#222]">
        <span className="w-[210px]">CODE V</span>
        <span className="w-[41px] border-l border-[#a09c94]">DIM: Millimeters</span>
        <span className="w-[108px] border-l border-[#a09c94]">Apertures Used: User-Defined Only</span>
        <span className="w-[54px] border-l border-[#a09c94]">Use ZX Plane: No</span>
        <span className="w-[104px] border-x border-[#a09c94]">Polarization Ray Tracing Active: Yes</span>
      </footer>

      <Dialog />
    </div>
  );
}
